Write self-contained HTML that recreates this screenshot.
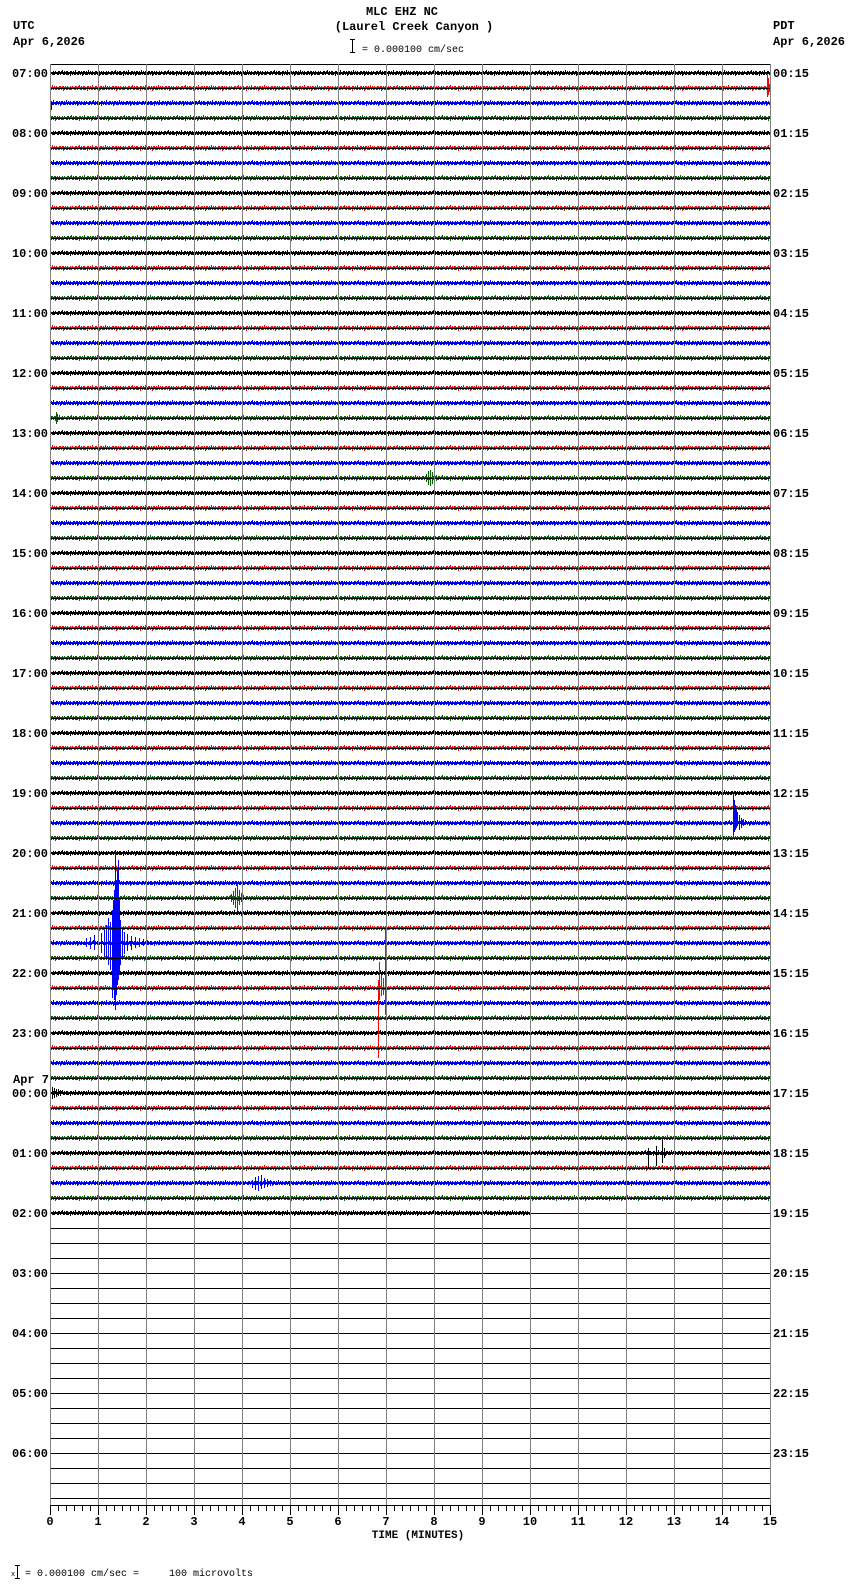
<!DOCTYPE html>
<html><head><meta charset="utf-8"><style>
html,body{margin:0;padding:0;background:#fff;}
svg{display:block;}
text{font-family:"Liberation Mono","DejaVu Sans Mono",monospace;}
.b{font-weight:bold;font-size:12px;}
</style></head><body>
<svg width="850" height="1584" viewBox="0 0 850 1584" xmlns="http://www.w3.org/2000/svg" shape-rendering="crispEdges">
<defs>
<path id="n" fill="none" stroke-width="1" d="M0.5,5V9M1.5,6V9M2.5,5V8M3.5,6V8M4.5,6V9M5.5,5V9M6.5,5V8M7.5,6V9M8.5,5V8M9.5,4V8M10.5,6V9M11.5,5V9M12.5,6V8M13.5,5V9M14.5,5V9M15.5,6V9M16.5,6V8M17.5,5V10M18.5,5V8M19.5,6V9M20.5,5V8M21.5,6V9M22.5,4V9M23.5,6V8M24.5,6V9M25.5,5V9M26.5,5V8M27.5,6V9M28.5,5V8M29.5,6V10M30.5,5V9M31.5,5V8M32.5,6V9M33.5,5V9M34.5,6V9M35.5,4V8M36.5,6V9M37.5,5V8M38.5,6V9M39.5,5V9M40.5,6V8M41.5,6V9M42.5,5V9M43.5,5V8M44.5,6V9M45.5,5V8M46.5,5V10M47.5,6V9M48.5,5V8M49.5,6V9M50.5,5V9M51.5,6V8M52.5,6V9"/>
<pattern id="pk" patternUnits="userSpaceOnUse" x="0" y="66" width="53" height="15"><use href="#n" stroke="#000"/></pattern>
<pattern id="pr" patternUnits="userSpaceOnUse" x="17" y="66" width="53" height="15"><use href="#n" stroke="#f00"/></pattern>
<pattern id="pb" patternUnits="userSpaceOnUse" x="31" y="66" width="53" height="15"><use href="#n" stroke="#00f"/></pattern>
<pattern id="pg" patternUnits="userSpaceOnUse" x="9" y="66" width="53" height="15"><use href="#n" stroke="#006400"/></pattern>
</defs>

<text x="402" y="15" text-anchor="middle" class="b">MLC EHZ NC</text>
<text x="414" y="30" text-anchor="middle" class="b">(Laurel Creek Canyon )</text>
<path d="M352.5,39V53M350,39.5H355M350,52.5H355" stroke="#000"/>
<text x="362" y="52" font-size="10">= 0.000100 cm/sec</text>
<text x="13" y="29" class="b">UTC</text>
<text x="13" y="45" class="b">Apr 6,2026</text>
<text x="773" y="29" class="b">PDT</text>
<text x="773" y="45" class="b">Apr 6,2026</text>

<rect x="50" y="66" width="721" height="15" fill="url(#pk)"/><rect x="50" y="81" width="721" height="15" fill="url(#pr)"/><rect x="50" y="96" width="721" height="15" fill="url(#pb)"/><rect x="50" y="111" width="721" height="15" fill="url(#pg)"/>
<rect x="50" y="126" width="721" height="15" fill="url(#pk)"/><rect x="50" y="141" width="721" height="15" fill="url(#pr)"/><rect x="50" y="156" width="721" height="15" fill="url(#pb)"/><rect x="50" y="171" width="721" height="15" fill="url(#pg)"/>
<rect x="50" y="186" width="721" height="15" fill="url(#pk)"/><rect x="50" y="201" width="721" height="15" fill="url(#pr)"/><rect x="50" y="216" width="721" height="15" fill="url(#pb)"/><rect x="50" y="231" width="721" height="15" fill="url(#pg)"/>
<rect x="50" y="246" width="721" height="15" fill="url(#pk)"/><rect x="50" y="261" width="721" height="15" fill="url(#pr)"/><rect x="50" y="276" width="721" height="15" fill="url(#pb)"/><rect x="50" y="291" width="721" height="15" fill="url(#pg)"/>
<rect x="50" y="306" width="721" height="15" fill="url(#pk)"/><rect x="50" y="321" width="721" height="15" fill="url(#pr)"/><rect x="50" y="336" width="721" height="15" fill="url(#pb)"/><rect x="50" y="351" width="721" height="15" fill="url(#pg)"/>
<rect x="50" y="366" width="721" height="15" fill="url(#pk)"/><rect x="50" y="381" width="721" height="15" fill="url(#pr)"/><rect x="50" y="396" width="721" height="15" fill="url(#pb)"/><rect x="50" y="411" width="721" height="15" fill="url(#pg)"/>
<rect x="50" y="426" width="721" height="15" fill="url(#pk)"/><rect x="50" y="441" width="721" height="15" fill="url(#pr)"/><rect x="50" y="456" width="721" height="15" fill="url(#pb)"/><rect x="50" y="471" width="721" height="15" fill="url(#pg)"/>
<rect x="50" y="486" width="721" height="15" fill="url(#pk)"/><rect x="50" y="501" width="721" height="15" fill="url(#pr)"/><rect x="50" y="516" width="721" height="15" fill="url(#pb)"/><rect x="50" y="531" width="721" height="15" fill="url(#pg)"/>
<rect x="50" y="546" width="721" height="15" fill="url(#pk)"/><rect x="50" y="561" width="721" height="15" fill="url(#pr)"/><rect x="50" y="576" width="721" height="15" fill="url(#pb)"/><rect x="50" y="591" width="721" height="15" fill="url(#pg)"/>
<rect x="50" y="606" width="721" height="15" fill="url(#pk)"/><rect x="50" y="621" width="721" height="15" fill="url(#pr)"/><rect x="50" y="636" width="721" height="15" fill="url(#pb)"/><rect x="50" y="651" width="721" height="15" fill="url(#pg)"/>
<rect x="50" y="666" width="721" height="15" fill="url(#pk)"/><rect x="50" y="681" width="721" height="15" fill="url(#pr)"/><rect x="50" y="696" width="721" height="15" fill="url(#pb)"/><rect x="50" y="711" width="721" height="15" fill="url(#pg)"/>
<rect x="50" y="726" width="721" height="15" fill="url(#pk)"/><rect x="50" y="741" width="721" height="15" fill="url(#pr)"/><rect x="50" y="756" width="721" height="15" fill="url(#pb)"/><rect x="50" y="771" width="721" height="15" fill="url(#pg)"/>
<rect x="50" y="786" width="721" height="15" fill="url(#pk)"/><rect x="50" y="801" width="721" height="15" fill="url(#pr)"/><rect x="50" y="816" width="721" height="15" fill="url(#pb)"/><rect x="50" y="831" width="721" height="15" fill="url(#pg)"/>
<rect x="50" y="846" width="721" height="15" fill="url(#pk)"/><rect x="50" y="861" width="721" height="15" fill="url(#pr)"/><rect x="50" y="876" width="721" height="15" fill="url(#pb)"/><rect x="50" y="891" width="721" height="15" fill="url(#pg)"/>
<rect x="50" y="906" width="721" height="15" fill="url(#pk)"/><rect x="50" y="921" width="721" height="15" fill="url(#pr)"/><rect x="50" y="936" width="721" height="15" fill="url(#pb)"/><rect x="50" y="951" width="721" height="15" fill="url(#pg)"/>
<rect x="50" y="966" width="721" height="15" fill="url(#pk)"/><rect x="50" y="981" width="721" height="15" fill="url(#pr)"/><rect x="50" y="996" width="721" height="15" fill="url(#pb)"/><rect x="50" y="1011" width="721" height="15" fill="url(#pg)"/>
<rect x="50" y="1026" width="721" height="15" fill="url(#pk)"/><rect x="50" y="1041" width="721" height="15" fill="url(#pr)"/><rect x="50" y="1056" width="721" height="15" fill="url(#pb)"/><rect x="50" y="1071" width="721" height="15" fill="url(#pg)"/>
<rect x="50" y="1086" width="721" height="15" fill="url(#pk)"/><rect x="50" y="1101" width="721" height="15" fill="url(#pr)"/><rect x="50" y="1116" width="721" height="15" fill="url(#pb)"/><rect x="50" y="1131" width="721" height="15" fill="url(#pg)"/>
<rect x="50" y="1146" width="721" height="15" fill="url(#pk)"/><rect x="50" y="1161" width="721" height="15" fill="url(#pr)"/><rect x="50" y="1176" width="721" height="15" fill="url(#pb)"/><rect x="50" y="1191" width="721" height="15" fill="url(#pg)"/>
<rect x="50" y="1206" width="481" height="15" fill="url(#pk)"/>

<g fill="none" stroke-width="1">
<path stroke="#f00" d="M767.5,73V97M768.5,78V95M769.5,84V92"/>
<path stroke="#00f" d="M51.5,101V110"/>
<path stroke="#006400" d="M56.5,412V424M57.5,414V422M59.5,415V420"/>
<path stroke="#006400" d="M426.5,474V482M428.5,471V485M430.5,470V486M432.5,472V484M434.5,473V483M436.5,475V481M438.5,476V480"/>
<path stroke="#00f" d="M733.5,792V835M734.5,800V832M735.5,805V830M736.5,808V828M737.5,812V826M739.5,815V830M741.5,818V828M743.5,819V826M745.5,820V825"/>
<path stroke="#006400" d="M231.5,894V902M233.5,891V905M235.5,888V908M237.5,885V911M239.5,890V905M241.5,893V902"/>
<path stroke="#00f" d="M86.5,938V947M90.5,937V949M94.5,935V950M98.5,934V952M101.5,933V953M104.5,930V956M106.5,925V960M108.5,918V965M110.5,922V970M112.5,910V998M113.5,900V990M114.5,890V1000M115.5,852V1010M116.5,880V995M117.5,870V985M118.5,860V980M119.5,900V975M120.5,920V965M122.5,928V958M124.5,932V954M127.5,934V951M131.5,936V950M135.5,937V948M139.5,938V947M143.5,939V946M147.5,940V945"/>
<path stroke="#f00" d="M378.5,980V1058M379.5,962V1000M381.5,975V996M385.5,930V1015M386.5,955V995M383.5,978V995"/>
<path stroke="#000" d="M52.5,1087V1099M54.5,1088V1098M56.5,1089V1097M58.5,1089V1096M60.5,1090V1096"/>
<path stroke="#000" d="M648.5,1148V1168M656.5,1146V1166M662.5,1140V1163M664.5,1148V1158"/>
<path stroke="#00f" d="M252.5,1180V1188M255.5,1177V1190M258.5,1176V1191M261.5,1175V1189M264.5,1178V1188M267.5,1179V1187M270.5,1180V1186"/>
</g>

<g stroke="#000" stroke-width="1">
<path d="M50,73.5H771M50,88.5H771M50,103.5H771M50,118.5H771M50,133.5H771M50,148.5H771M50,163.5H771M50,178.5H771M50,193.5H771M50,208.5H771M50,223.5H771M50,238.5H771M50,253.5H771M50,268.5H771M50,283.5H771M50,298.5H771M50,313.5H771M50,328.5H771M50,343.5H771M50,358.5H771M50,373.5H771M50,388.5H771M50,403.5H771M50,418.5H771M50,433.5H771M50,448.5H771M50,463.5H771M50,478.5H771M50,493.5H771M50,508.5H771M50,523.5H771M50,538.5H771M50,553.5H771M50,568.5H771M50,583.5H771M50,598.5H771M50,613.5H771M50,628.5H771M50,643.5H771M50,658.5H771M50,673.5H771M50,688.5H771M50,703.5H771M50,718.5H771M50,733.5H771M50,748.5H771M50,763.5H771M50,778.5H771M50,793.5H771M50,808.5H771M50,823.5H771M50,838.5H771M50,853.5H771M50,868.5H771M50,883.5H771M50,898.5H771M50,913.5H771M50,928.5H771M50,943.5H771M50,958.5H771M50,973.5H771M50,988.5H771M50,1003.5H771M50,1018.5H771M50,1033.5H771M50,1048.5H771M50,1063.5H771M50,1078.5H771M50,1093.5H771M50,1108.5H771M50,1123.5H771M50,1138.5H771M50,1153.5H771M50,1168.5H771M50,1183.5H771M50,1198.5H771M50,1213.5H771M50,1228.5H771M50,1243.5H771M50,1258.5H771M50,1273.5H771M50,1288.5H771M50,1303.5H771M50,1318.5H771M50,1333.5H771M50,1348.5H771M50,1363.5H771M50,1378.5H771M50,1393.5H771M50,1408.5H771M50,1423.5H771M50,1438.5H771M50,1453.5H771M50,1468.5H771M50,1483.5H771M50,1498.5H771"/>
<path d="M50,64.5H771"/>
</g>

<g stroke="#808080" stroke-width="1">
<path d="M50.5,64V1505M98.5,64V1505M146.5,64V1505M194.5,64V1505M242.5,64V1505M290.5,64V1505M338.5,64V1505M386.5,64V1505M434.5,64V1505M482.5,64V1505M530.5,64V1505M578.5,64V1505M626.5,64V1505M674.5,64V1505M722.5,64V1505M770.5,64V1505"/>
</g>

<g stroke="#000" stroke-width="1">
<path d="M50,1505.5H771"/>
<path id="tk" d="M50.5,1505V1515M58.5,1505V1511M66.5,1505V1511M74.5,1505V1511M82.5,1505V1511M90.5,1505V1511"/>
<use href="#tk" x="48"/><use href="#tk" x="96"/><use href="#tk" x="144"/><use href="#tk" x="192"/><use href="#tk" x="240"/><use href="#tk" x="288"/><use href="#tk" x="336"/><use href="#tk" x="384"/><use href="#tk" x="432"/><use href="#tk" x="480"/><use href="#tk" x="528"/><use href="#tk" x="576"/><use href="#tk" x="624"/><use href="#tk" x="672"/>
<path d="M770.5,1505V1515"/>
</g>
<g text-anchor="middle">
<text x="50" y="1525" class="b">0</text><text x="98" y="1525" class="b">1</text><text x="146" y="1525" class="b">2</text><text x="194" y="1525" class="b">3</text><text x="242" y="1525" class="b">4</text><text x="290" y="1525" class="b">5</text><text x="338" y="1525" class="b">6</text><text x="386" y="1525" class="b">7</text><text x="434" y="1525" class="b">8</text><text x="482" y="1525" class="b">9</text><text x="530" y="1525" class="b">10</text><text x="578" y="1525" class="b">11</text><text x="626" y="1525" class="b">12</text><text x="674" y="1525" class="b">13</text><text x="722" y="1525" class="b">14</text><text x="770" y="1525" class="b">15</text>
</g>
<text x="418" y="1538" text-anchor="middle" font-size="11" font-weight="bold">TIME (MINUTES)</text>

<g text-anchor="end">
<text x="48" y="77" class="b">07:00</text><text x="48" y="137" class="b">08:00</text><text x="48" y="197" class="b">09:00</text><text x="48" y="257" class="b">10:00</text><text x="48" y="317" class="b">11:00</text><text x="48" y="377" class="b">12:00</text><text x="48" y="437" class="b">13:00</text><text x="48" y="497" class="b">14:00</text><text x="48" y="557" class="b">15:00</text><text x="48" y="617" class="b">16:00</text><text x="48" y="677" class="b">17:00</text><text x="48" y="737" class="b">18:00</text><text x="48" y="797" class="b">19:00</text><text x="48" y="857" class="b">20:00</text><text x="48" y="917" class="b">21:00</text><text x="48" y="977" class="b">22:00</text><text x="48" y="1037" class="b">23:00</text><text x="48" y="1097" class="b">00:00</text><text x="48" y="1157" class="b">01:00</text><text x="48" y="1217" class="b">02:00</text><text x="48" y="1277" class="b">03:00</text><text x="48" y="1337" class="b">04:00</text><text x="48" y="1397" class="b">05:00</text><text x="48" y="1457" class="b">06:00</text>
</g>
<text x="13" y="1083" class="b">Apr 7</text>
<g>
<text x="773" y="77" class="b">00:15</text><text x="773" y="137" class="b">01:15</text><text x="773" y="197" class="b">02:15</text><text x="773" y="257" class="b">03:15</text><text x="773" y="317" class="b">04:15</text><text x="773" y="377" class="b">05:15</text><text x="773" y="437" class="b">06:15</text><text x="773" y="497" class="b">07:15</text><text x="773" y="557" class="b">08:15</text><text x="773" y="617" class="b">09:15</text><text x="773" y="677" class="b">10:15</text><text x="773" y="737" class="b">11:15</text><text x="773" y="797" class="b">12:15</text><text x="773" y="857" class="b">13:15</text><text x="773" y="917" class="b">14:15</text><text x="773" y="977" class="b">15:15</text><text x="773" y="1037" class="b">16:15</text><text x="773" y="1097" class="b">17:15</text><text x="773" y="1157" class="b">18:15</text><text x="773" y="1217" class="b">19:15</text><text x="773" y="1277" class="b">20:15</text><text x="773" y="1337" class="b">21:15</text><text x="773" y="1397" class="b">22:15</text><text x="773" y="1457" class="b">23:15</text>
</g>

<text x="11" y="1576" font-size="7">x</text>
<path d="M17.5,1565V1579M15,1565.5H20M15,1578.5H20" stroke="#000"/>
<text x="25" y="1576" font-size="10" xml:space="preserve">= 0.000100 cm/sec =     100 microvolts</text>
</svg>
</body></html>
